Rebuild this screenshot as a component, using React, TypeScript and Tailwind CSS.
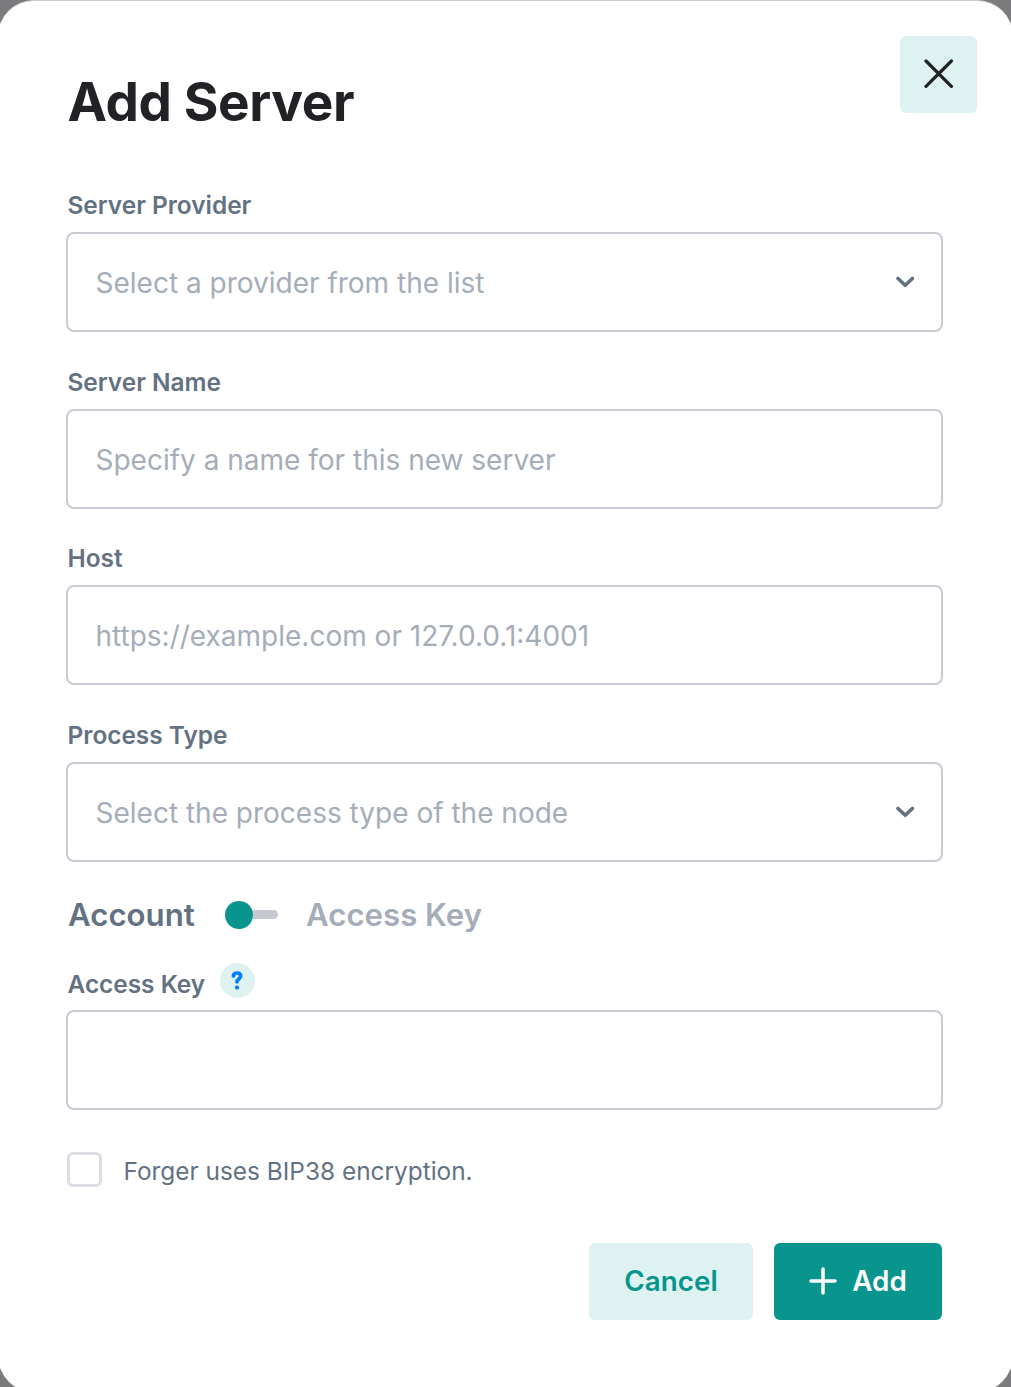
import React from 'react';

function Label({ children }: { children: React.ReactNode }) {
  return <span className="block h-8 pl-[1.5px] text-[24.4px] font-semibold leading-8 text-[#637282]">{children}</span>;
}

function Field({ label, placeholder, select }: { label: string; placeholder: string; select?: boolean }) {
  return (
    <div className="mb-[33.7px]">
      <Label>{label}</Label>
      <div className="mt-[11px] flex h-[100px] items-center justify-between rounded-lg border-2 border-[#c8ccd3] pl-[27.5px] pr-[26.5px] text-[28px] text-[#a5adb9]">
        <span className="pt-[2px] font-[370]">{placeholder}</span>
        {select && (
          <svg width="20" height="12" viewBox="0 0 20 12" fill="none" stroke="#637282" strokeWidth="3.6" strokeLinecap="round" strokeLinejoin="round">
            <path d="M3 2.5 10.2 9.3l7.2-6.8" />
          </svg>
        )}
      </div>
    </div>
  );
}

export default function App() {
  return (
    <div className="h-[1387px] w-[1011px] overflow-hidden bg-[#7b7b7d]" style={{ fontFamily: 'Inter, sans-serif' }}>
      <main className="relative -mx-[2px] h-[1392px] rounded-[36px] border-t border-[#cbcbcc] bg-white pl-[68px] pr-[70px] pt-[69px]">
        <button className="absolute right-[36px] top-[34.5px] flex size-[77px] items-center justify-center rounded-md bg-[#def3f1]">
          <svg width="30" height="30" viewBox="0 0 30 30" fill="none" stroke="#212225" strokeWidth="3.2" strokeLinecap="round"><path d="m2 2 25.4 25.4M27.4 2 2 27.4" /></svg>
        </button>
        <h1 className="mb-[55px] h-16 pl-[1.5px] text-[53px] font-bold leading-[64px] tracking-[-0.38px] text-[#212225]">Add Server</h1>
        <Field label="Server Provider" placeholder="Select a provider from the list" select />
        <Field label="Server Name" placeholder="Specify a name for this new server" />
        <Field label="Host" placeholder="https://example.com or 127.0.0.1:4001" />
        <Field label="Process Type" placeholder="Select the process type of the node" select />
        <div className="-mt-px flex h-10 items-center pl-[2px] text-[31.2px] font-semibold">
          <span className="w-[157px] pt-[2px] text-[#637282]">Account</span>
          <div className="flex w-[53px] items-center"><span className="size-7 rounded-full bg-[#07958d]" /><span className="h-[9px] w-[25px] rounded-r-full bg-[#c4c8cf]" /></div>
          <span className="ml-7 pt-[2px] text-[#a5adb9]">Access Key</span>
        </div>
        <div className="mt-[28px] flex h-9 items-center">
          <div className="pt-[6px]"><Label>Access Key</Label></div>
          <span className="ml-[14.5px] flex size-[35px] items-center justify-center rounded-full bg-[#def3f1]">
            <svg width="12" height="19" viewBox="0 0 12 19" fill="none" stroke="#007dff" strokeWidth="3.7" strokeLinecap="round" strokeLinejoin="round">
              <path d="M2.4 5C2.6 3 4 2 6 2c2.3 0 3.6 1.3 3.6 3.2C9.6 8 6 8 6 10.8" />
              <circle cx="6" cy="16.6" r="2.1" fill="#007dff" stroke="none" />
            </svg>
          </span>
        </div>
        <div className="mt-[11px] h-[100px] rounded-lg border-2 border-[#c8ccd3]" />
        <div className="mt-[41px] flex h-[38px] items-center text-[24.4px] text-[#637282]"><span className="ml-[1px] mr-[21.5px] size-[35px] rounded-md border-[3px] border-[#dbdee5]" /><span className="pt-[3px] font-[380]">Forger uses BIP38 encryption.</span></div>
        <div className="mr-px mt-[54px] flex justify-end gap-[21px] text-[27.8px] font-semibold">
          <button className="h-[77px] w-[164px] rounded-md bg-[#def3f1] pt-px text-[#07958d]">Cancel</button>
          <button className="flex h-[77px] w-[168px] items-center justify-center gap-[15px] rounded-md bg-[#07958d] text-white">
            <svg width="28" height="28" viewBox="0 0 28 28" stroke="currentColor" strokeWidth="3.5" strokeLinecap="round"><path d="M14 2v24M2 14h24" /></svg><span className="pt-px">Add</span>
          </button>
        </div>
      </main>
    </div>
  );
}
